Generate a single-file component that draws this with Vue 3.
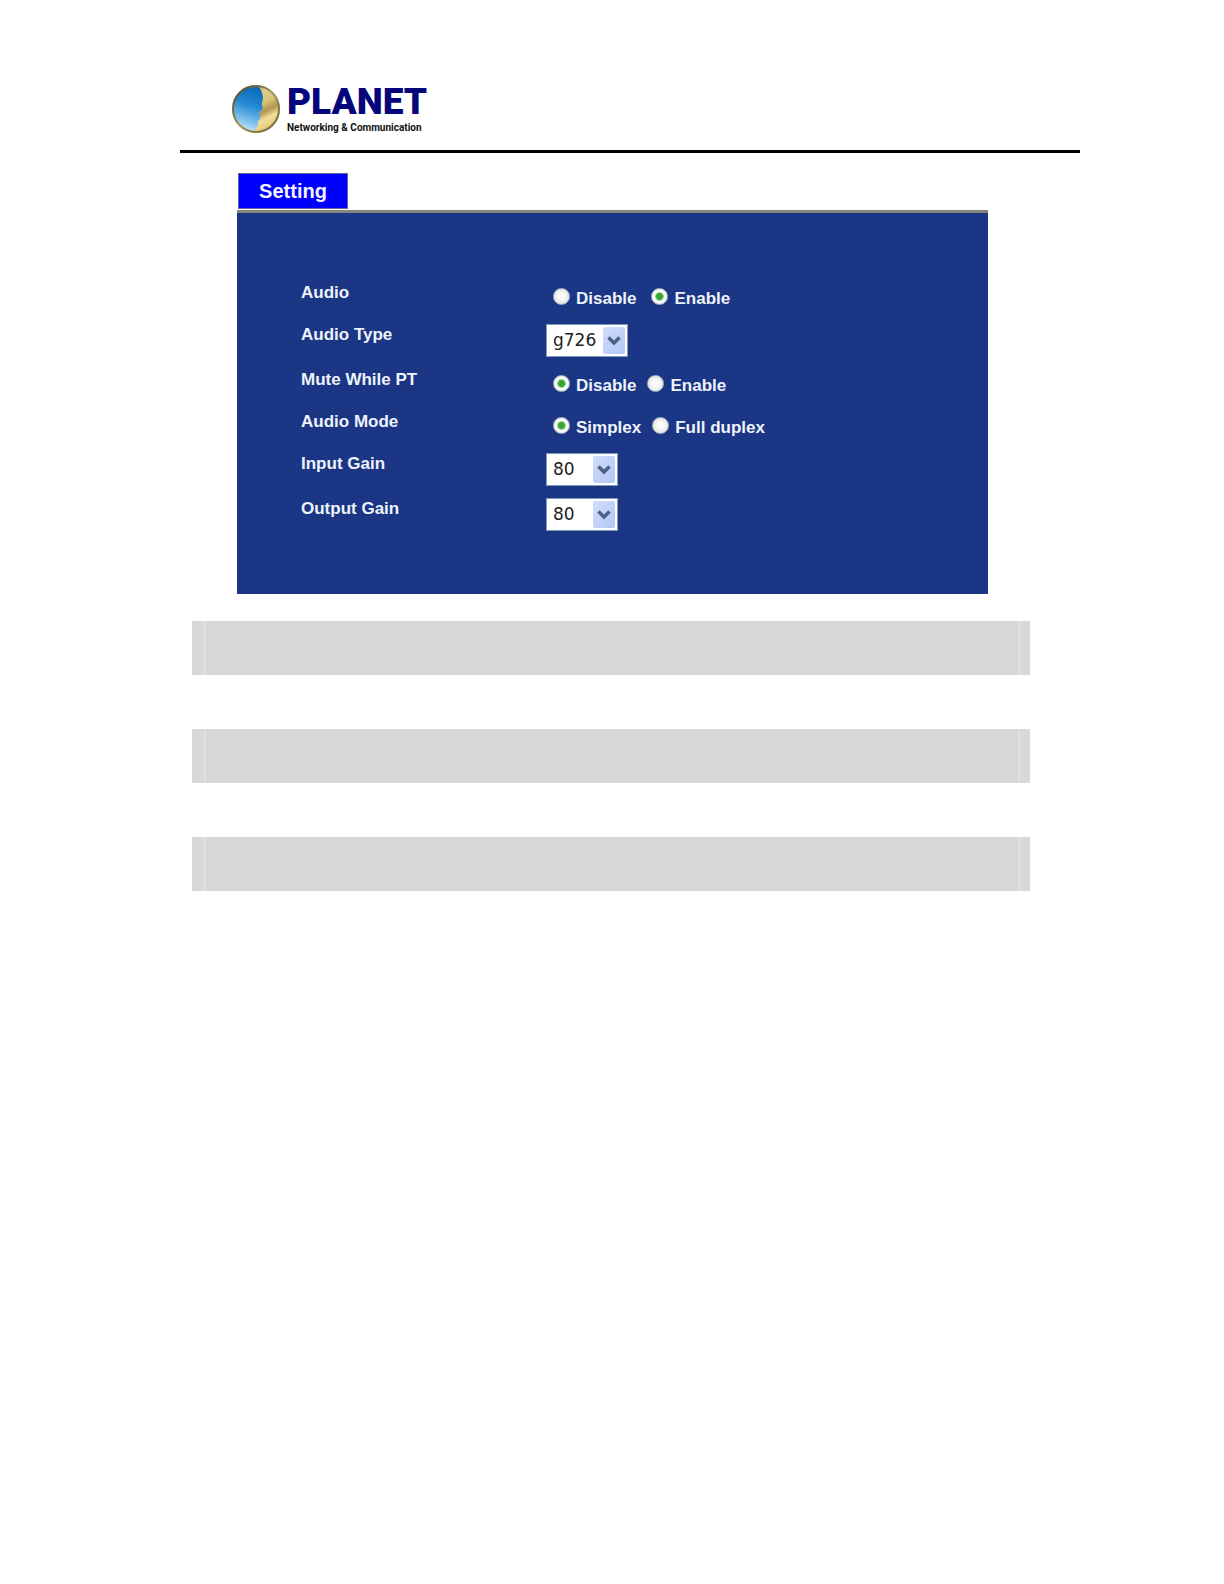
<script setup>
import { ref } from 'vue';

const rows = ref([
  { id: 'audio', label: 'Audio', type: 'radio', options: ['Disable', 'Enable'], value: 'Enable', wide: true },
  { id: 'audio-type', label: 'Audio Type', type: 'select', options: ['g726'], value: 'g726', wide: true },
  { id: 'mute', label: 'Mute While PT', type: 'radio', options: ['Disable', 'Enable'], value: 'Disable' },
  { id: 'mode', label: 'Audio Mode', type: 'radio', options: ['Simplex', 'Full duplex'], value: 'Simplex' },
  { id: 'input-gain', label: 'Input Gain', type: 'select', options: ['80'], value: '80' },
  { id: 'output-gain', label: 'Output Gain', type: 'select', options: ['80'], value: '80' },
])
</script>

<template>
  <div class="page">
    <header class="header">
      <svg class="globe" viewBox="0 0 50 50" aria-hidden="true">
        <defs>
          <linearGradient id="gold" x1="0.4" y1="0" x2="0.9" y2="1">
            <stop offset="0" stop-color="#8d7638" />
            <stop offset="0.2" stop-color="#e2cd86" />
            <stop offset="0.4" stop-color="#d9c27a" />
            <stop offset="0.55" stop-color="#b0954f" />
            <stop offset="0.68" stop-color="#f3df9a" />
            <stop offset="0.85" stop-color="#e3ca7a" />
            <stop offset="1" stop-color="#8f783a" />
          </linearGradient>
          <linearGradient id="sky" x1="0.6" y1="0" x2="0.4" y2="1">
            <stop offset="0" stop-color="#0a68b4" />
            <stop offset="0.4" stop-color="#2389d2" />
            <stop offset="0.75" stop-color="#7fc0ea" />
            <stop offset="1" stop-color="#d5edf8" />
          </linearGradient>
          <linearGradient id="rim" x1="0" y1="0" x2="1" y2="1">
            <stop offset="0" stop-color="#3e4228" />
            <stop offset="0.5" stop-color="#a4965e" />
            <stop offset="1" stop-color="#6d6033" />
          </linearGradient>
        </defs>
        <circle cx="25" cy="25" r="24" fill="url(#gold)" />
        <path
          d="M27 2C13 1 2 12 2 25c0 12 9 22 20 23c3-2 4-4 5-7c.5-2-.5-3 .5-4.500c.7-1 2-.8 1.800-2.200c0-.8-1-1-.7-1.800c.2-.8 1.200-.8 .9-1.800c-.2-.9-1.900-.7-1.800-1.700c.2-1.200 3-2.500 3.800-4c.8-1.500-.6-3-.6-5c0-2 1.200-3.500 1-7c-.2-4-2-8-4.900-11z"
          fill="url(#sky)"
        />
        <circle cx="25" cy="25" r="23" fill="none" stroke="url(#rim)" stroke-width="2" />
      </svg>
      <div class="brand">
        <div class="name">PLANET</div>
        <div class="tagline">Networking &amp; Communication</div>
      </div>
    </header>

    <main class="main">
      <button type="button" class="tab">Setting</button>
      <form class="panel">
        <div v-for="row in rows" :key="row.id" class="row">
          <template v-if="row.type === 'select'">
            <label class="label" :for="row.id">{{ row.label }}</label>
            <div class="select" :class="{ wide: row.wide }">
              <select :id="row.id" v-model="row.value">
                <option v-for="option in row.options" :key="option">{{ option }}</option>
              </select>
              <svg class="arrow" viewBox="0 0 22 27" aria-hidden="true">
                <path d="M5.500 10.500l5.500 5.500l5.500-5.500" fill="none" stroke="#4d6185" stroke-width="3.500" />
              </svg>
            </div>
          </template>
          <template v-else>
            <span :id="row.id" class="label">{{ row.label }}</span>
            <div class="radios" :class="{ wide: row.wide }" role="radiogroup" :aria-labelledby="row.id">
              <label v-for="option in row.options" :key="option" class="radio">
                <input v-model="row.value" type="radio" :name="row.id" :value="option">
                <span>{{ option }}</span>
              </label>
            </div>
          </template>
        </div>
      </form>
    </main>

    <section class="bars">
      <div v-for="n in 3" :key="n" class="bar">
        <div class="cell"></div>
      </div>
    </section>
  </div>
</template>

<style>
body {
  margin: 0;
  background: #fff;
}
</style>

<style scoped>
.page {
  box-sizing: border-box;
  padding: 82px 144px 80px 180px;
  font-family: "Liberation Sans", Arial, sans-serif;
}

.header {
  display: flex;
  gap: 6px;
  height: 68px;
  padding-left: 51px;
  border-bottom: 3px solid #000;
}

.globe {
  width: 50px;
  height: 50px;
  margin-top: 2px;
}

.brand {
  font-family: Roboto, "Liberation Sans", Arial, sans-serif;
  font-weight: bold;
  white-space: nowrap;
}

.name {
  color: #06067c;
  font-size: 37px;
  font-weight: 900;
  line-height: 40px;
}

.tagline {
  color: #111;
  font-size: 10px;
  line-height: 12px;
}

.main {
  margin: 20px 92px 0 57px;
}

.tab {
  display: block;
  width: 110px;
  height: 36px;
  margin: 0 0 1px 1px;
  padding: 0;
  border: 1px solid #65659a;
  background: #0000fe;
  color: #f4f4ff;
  font-family: inherit;
  font-size: 20px;
  font-weight: bold;
}

.panel {
  padding: 64px 64px 59px;
  border-top: 3px solid #85857c;
  background: #1a3684;
  color: #eef2fa;
  font-size: 17px;
  font-weight: bold;
}

.row {
  display: grid;
  grid-template-columns: 245px 1fr;
  align-items: center;
  height: 42px;
}

.row:nth-child(3n) {
  margin-top: 3px;
}

.label {
  padding-bottom: 10px;
}

.radios {
  display: flex;
  gap: 11px;
  padding: 2px 0 0 7px;
}

.radios.wide {
  gap: 15px;
}

.radio {
  display: flex;
  align-items: flex-start;
  gap: 6px;
  line-height: 22px;
}

.radio input {
  appearance: none;
  box-sizing: border-box;
  width: 17px;
  height: 17px;
  margin: 0;
  border: 1px solid #a9b9c0;
  border-radius: 50%;
  background: radial-gradient(circle, #fafafa 30%, #e2e3df 75%);
}

.radio input:checked {
  background: radial-gradient(circle, #2fa52f 0, #3aa93a 3px, #fff 5px, #e8ece4 8px);
}

.select {
  position: relative;
  width: 72px;
  height: 33px;
}

.select.wide {
  width: 82px;
}

.select select {
  appearance: none;
  box-sizing: border-box;
  width: 100%;
  height: 100%;
  padding: 0 0 0 6px;
  border: 1px solid #7f9db9;
  border-radius: 0;
  background: #fff;
  color: #222;
  font-family: "DejaVu Sans", Verdana, sans-serif;
  font-size: 17px;
}

.arrow {
  position: absolute;
  top: 3px;
  right: 3px;
  width: 22px;
  height: 27px;
  border-radius: 2px;
  background: linear-gradient(135deg, #d0dcfb, #b3c8f6);
  pointer-events: none;
}

.bars {
  display: grid;
  gap: 54px;
  margin: 27px 50px 0 12px;
}

.bar {
  height: 54px;
  padding: 0 10px 0 12px;
  background: #d8d8d8;
}

.cell {
  height: 100%;
  border: solid #e6e6e6;
  border-width: 0 1px;
}
</style>
